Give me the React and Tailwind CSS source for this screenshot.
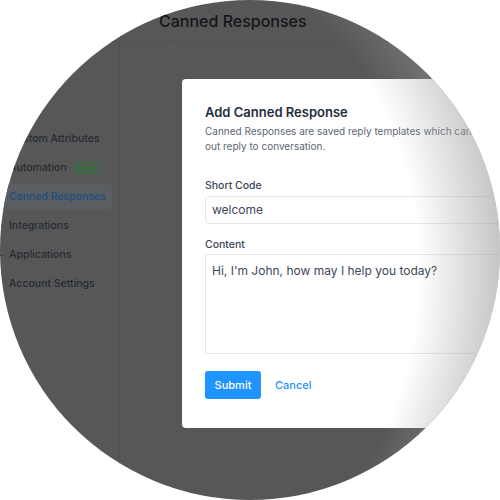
import React from "react";

function Icon({ d }) {
  return (
    <svg width="12" height="12" viewBox="0 0 24 24" fill="none" stroke="currentColor" strokeWidth="2" strokeLinecap="round" strokeLinejoin="round" className="shrink-0">
      <path d={d} />
    </svg>
  );
}

const items = [
  { label: "Custom Attributes", d: "M4 6h16M4 12h16M4 18h10" },
  { label: "Automation", d: "M13 2L4 14h7l-1 8 9-12h-7z", beta: true },
  { label: "Canned Responses", d: "M4 5h16v11H8l-4 4z", active: true },
  { label: "Integrations", d: "M12 3v6M12 15v6M3 12h6M15 12h6" },
  { label: "Applications", d: "M12 8a4 4 0 100 8 4 4 0 000-8zM12 2v3M12 19v3M2 12h3M19 12h3" },
  { label: "Account Settings", d: "M4 4h16v16H4zM8 10h8M8 14h5" },
];

export default function App() {
  return (
    <div className="w-[500px] h-[500px] bg-white font-['Inter',sans-serif]">
      <div className="relative w-[500px] h-[500px] rounded-full overflow-hidden bg-[#575758]">
        <div className="flex flex-col h-full">
          <div className="h-[42px] shrink-0 flex items-center pl-[133px] gap-[6px] border-b border-[#525254] text-[#141518]">
            <svg width="14" height="14" viewBox="0 0 24 24" fill="none" stroke="currentColor" strokeWidth="2.2" strokeLinecap="round" strokeLinejoin="round">
              <path d="M19 12H5M11 6l-6 6 6 6" />
            </svg>
            <span className="text-[16px] leading-none ml-[6px] font-medium">Canned Responses</span>
          </div>
          <div className="flex flex-1">
            <div className="w-[137px] ml-[-17px] shrink-0 border-r border-[#525254] pt-[84px] pr-[7px] pl-[4px] flex flex-col gap-[4px]">
              {items.map((it) => (
                <div
                  key={it.label}
                  className={
                    "h-[25px] flex items-center gap-[6px] pl-[4px] rounded-[3px] text-[10.5px] font-medium " +
                    (it.active ? "bg-[#5a5d62] text-[#1f4f80]" : "text-[#262b33]")
                  }
                >
                  <Icon d={it.d} />
                  <span className="whitespace-nowrap">{it.label}</span>
                  {it.beta && (
                    <span className="ml-[1px] h-[12px] px-[3px] flex items-center rounded-full border border-[#1f7a2d] text-[#1f7a2d] text-[8px] font-medium leading-none">
                      Beta
                    </span>
                  )}
                </div>
              ))}
            </div>
            <div className="flex-1 border-l border-[#5a5a5c] ml-[52px]" />
          </div>
        </div>

        <div className="absolute left-[182px] top-[79px] w-[460px] h-[349px] bg-white rounded-[4px] pt-[25px] pl-[23px] pr-[20px]">
          <div className="text-[13px] leading-[16px] font-semibold text-[#1f2d3d]">Add Canned Response</div>
          <div className="mt-[4px] text-[10px] leading-[15px] text-[#5c6673] whitespace-nowrap">
            Canned Responses are saved reply templates which can be used to quickly send
            <br />
            out reply to conversation.
          </div>
          <div className="mt-[25px] text-[10.5px] leading-[14px] font-medium text-[#3c4858]">Short Code</div>
          <div className="mt-[3px] h-[28px] border border-[#e4e8ee] rounded-[3px] flex items-center pl-[6px] text-[12px] text-[#3c4858]">
            welcome
          </div>
          <div className="mt-[14px] text-[10.5px] leading-[14px] font-medium text-[#3c4858]">Content</div>
          <div className="mt-[2px] h-[100px] border border-[#e4e8ee] rounded-[3px] pl-[6px] pt-[8px] text-[12px] leading-[16px] text-[#3c4858]">
            Hi, I'm John, how may I help you today?
          </div>
          <div className="mt-[17px] flex items-center gap-[14px]">
            <div className="w-[56px] h-[28px] rounded-[3px] bg-[#1f93ff] text-white text-[11px] font-medium flex items-center justify-center">
              Submit
            </div>
            <div className="text-[11px] font-medium text-[#1f93ff]">Cancel</div>
          </div>
        </div>

        <div className="absolute inset-0 rounded-full pointer-events-none bg-[radial-gradient(ellipse_280px_380px_at_200px_270px,transparent_78%,rgba(160,160,160,0.6)_107%)]" />
      </div>
    </div>
  );
}
